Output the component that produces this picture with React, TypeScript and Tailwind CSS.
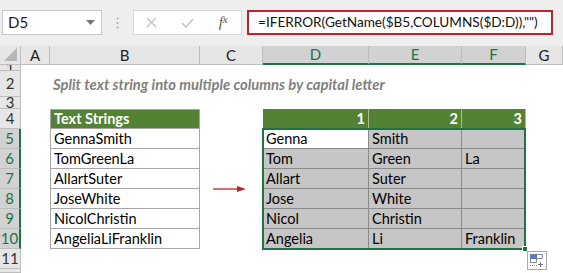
import React from "react";

const cols = ["A", "B", "C", "D", "E", "F", "G"];
const selCols = ["D", "E", "F"];

const rows: { n: string; sel?: boolean }[] = [
  { n: "1" },
  { n: "2" },
  { n: "3" },
  { n: "4" },
  { n: "5", sel: true },
  { n: "6", sel: true },
  { n: "7", sel: true },
  { n: "8", sel: true },
  { n: "9", sel: true },
  { n: "10", sel: true },
  { n: "11" },
  { n: "" },
];

const data = [
  { src: "GennaSmith", parts: ["Genna", "Smith", ""] },
  { src: "TomGreenLa", parts: ["Tom", "Green", "La"] },
  { src: "AllartSuter", parts: ["Allart", "Suter", ""] },
  { src: "JoseWhite", parts: ["Jose", "White", ""] },
  { src: "NicolChristin", parts: ["Nicol", "Christin", ""] },
  { src: "AngeliaLiFranklin", parts: ["Angelia", "Li", "Franklin"] },
];

const FormulaBar = () => (
  <div className="h-[46px] bg-[#eeeeee] flex items-start pt-[10px] pl-[2px]">
    <div className="w-[100px] h-[25px] bg-white border border-[#c6c6c6] flex items-center justify-between pl-[5px] pr-[6px] text-[15px] text-[#222]">
      <span>D5</span>
      <svg width="9" height="5" viewBox="0 0 9 5">
        <path d="M0 0h9L4.5 5z" fill="#777" />
      </svg>
    </div>
    <div className="w-[31px] h-[25px] flex items-center justify-center">
      <svg width="3" height="12" viewBox="0 0 3 12">
        <circle cx="1.5" cy="1.5" r="1" fill="#aaa" />
        <circle cx="1.5" cy="6" r="1" fill="#aaa" />
        <circle cx="1.5" cy="10.5" r="1" fill="#aaa" />
      </svg>
    </div>
    <div className="w-[109px] h-[25px] bg-white border border-[#d6d6d6] flex items-center">
      <div className="w-[36px] flex justify-center">
        <svg width="11" height="11" viewBox="0 0 11 11">
          <path d="M1 1l9 9M10 1l-9 9" stroke="#c4c4c4" strokeWidth="1.3" />
        </svg>
      </div>
      <div className="w-[36px] flex justify-center">
        <svg width="13" height="10" viewBox="0 0 13 10">
          <path d="M1 5l4 4 7-8" stroke="#c4c4c4" strokeWidth="1.5" fill="none" />
        </svg>
      </div>
      <div className="w-[36px] flex justify-center font-['Liberation_Serif',serif] italic text-[15px] text-[#555]">
        f<span className="text-[11px]">x</span>
      </div>
    </div>
    <div className="ml-[5px] w-[306px] h-[25px] bg-white border-2 border-[#c0222b] flex items-center pl-[9px] text-[13.6px] text-[#111] whitespace-nowrap">
      =IFERROR(GetName($B5,COLUMNS($D:D)),"")
    </div>
  </div>
);

const QuickAnalysis = () => (
  <div className="absolute left-[527px] top-[251px] w-[20px] h-[19px] bg-white border border-[#a8a8a8] flex items-center justify-center">
    <svg width="14" height="13" viewBox="0 0 14 13">
      <rect x="0.5" y="0.5" width="6" height="4" fill="#3b82f6" stroke="#6b7280" strokeWidth="0.8" />
      <rect x="6.5" y="0.5" width="6" height="4" fill="none" stroke="#6b7280" strokeWidth="0.8" />
      <rect x="0.5" y="4.5" width="6" height="4" fill="none" stroke="#6b7280" strokeWidth="0.8" />
      <path d="M0 11.5h7" stroke="#6b7280" strokeWidth="0.8" strokeDasharray="1 1" />
      <path d="M10.5 8v5M8 10.5h5" stroke="#6b7280" strokeWidth="1" />
    </svg>
  </div>
);

const App: React.FC = () => {
  return (
    <div className="w-[563px] h-[273px] overflow-hidden relative bg-white font-['Lato','Liberation_Sans',sans-serif]">
      <FormulaBar />

      <div className="grid grid-cols-[21px_29px_150px_63px_106px_93px_64px_37px] grid-rows-[19px_6px_26px_12px_20px_20px_20px_20px_20px_20px_20px_20px_4px] text-[14.5px]">
        {/* header row */}
        <div className="bg-[#e6e6e6] border-r border-b border-[#bdbdbd] relative">
          <svg className="absolute right-[3px] bottom-[3px]" width="13" height="13" viewBox="0 0 13 13">
            <path d="M13 0V13H0z" fill="#b5b5b5" />
          </svg>
        </div>
        {cols.map((c) => {
          const sel = selCols.includes(c);
          return (
            <div
              key={c}
              className={
                sel
                  ? "bg-[#d2d2d2] border-r border-[#bdbdbd] border-b-2 border-b-[#217346] flex items-center justify-center text-[#217346] text-[15px] leading-none"
                  : "bg-[#e6e6e6] border-r border-b border-[#bdbdbd] flex items-center justify-center text-[#222] text-[15px] leading-none"
              }
            >
              {c}
            </div>
          );
        })}

        {rows.map((r, i) => (
          <div
            key={"h" + i}
            className={
              r.sel
                ? "bg-[#d2d2d2] border-b border-[#bdbdbd] border-r-2 border-r-[#217346] text-[#217346] text-[15px] flex items-center justify-center overflow-hidden leading-none"
                : "bg-[#e6e6e6] border-b border-r border-[#bdbdbd] text-[#333] text-[15px] flex items-center justify-center overflow-hidden leading-none"
            }
            style={{ gridRow: i + 2, gridColumn: 1 }}
          >
            {r.n}
          </div>
        ))}

        {/* title */}
        <div className="col-start-3 col-span-6 row-start-3 flex items-center pl-[3px] font-bold italic text-[#7f7f7f] text-[14.8px] whitespace-nowrap">
          Split text string into multiple columns by capital letter
        </div>

        {/* source table */}
        <div className="col-start-3 row-start-5 bg-[#548235] border border-[#a6a6a6] flex items-center pl-[3px] font-bold text-white whitespace-nowrap">
          Text Strings
        </div>
        {data.map((d, i) => (
          <div
            key={d.src}
            className="col-start-3 border-x border-b border-[#a6a6a6] flex items-center pl-[3px] text-black whitespace-nowrap"
            style={{ gridRow: 6 + i }}
          >
            {d.src}
          </div>
        ))}

        {/* arrow */}
        <div className="col-start-4 row-start-8 row-span-2 flex items-center pl-[13px]">
          <svg width="33" height="6" viewBox="0 0 33 6">
            <path d="M0 3h26" stroke="#b02a2a" strokeWidth="1.3" />
            <path d="M24 0l9 3-9 3z" fill="#b02a2a" />
          </svg>
        </div>

        {/* result header */}
        {["1", "2", "3"].map((n, j) => (
          <div
            key={n}
            className="row-start-5 bg-[#548235] border-r border-[#a9bf94] flex items-center justify-end pr-[3px] font-bold text-white"
            style={{ gridColumn: 5 + j }}
          >
            {n}
          </div>
        ))}

        {/* result body */}
        {data.map((d, i) =>
          d.parts.map((p, j) => (
            <div
              key={d.src + j}
              className={
                (i === 0 && j === 0 ? "bg-white " : "bg-[#c6c6c6] ") +
                "border-r border-b border-[#8a8a8a] flex items-center pl-[3px] text-black whitespace-nowrap overflow-hidden"
              }
              style={{ gridRow: 6 + i, gridColumn: 5 + j }}
            >
              {p}
            </div>
          ))
        )}
      </div>

      {/* selection outline + fill handle */}
      <div className="absolute left-[262px] top-[128px] w-[264px] h-[122px] border-2 border-[#217346]" />
      <div className="absolute left-[522px] top-[246px] w-[6px] h-[6px] bg-[#217346] border border-white" />
      <QuickAnalysis />
    </div>
  );
};

export default App;
